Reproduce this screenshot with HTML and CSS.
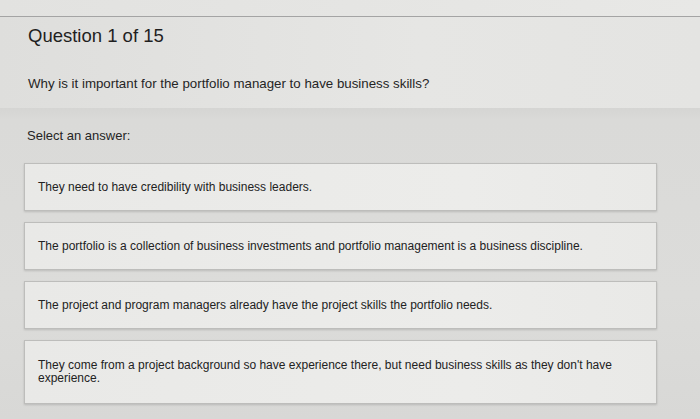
FILE: index.html
```html
<!DOCTYPE html>
<html>
<head>
<meta charset="utf-8">
<link rel="stylesheet" href="styles.css">
</head>
<body>
<div class="page">
  <div class="topbar"></div>
  <div class="header">
    <h1 class="title">Question 1 of 15</h1>
    <p class="question">Why is it important for the portfolio manager to have business skills?</p>
  </div>
  <div class="content">
    <p class="prompt">Select an answer:</p>
    <div class="options">
      <div class="option">They need to have credibility with business leaders.</div>
      <div class="option">The portfolio is a collection of business investments and portfolio management is a business discipline.</div>
      <div class="option">The project and program managers already have the project skills the portfolio needs.</div>
      <div class="option tall">They come from a project background so have experience there, but need business skills as they don't have experience.</div>
    </div>
  </div>
</div>
</body>
</html>
```
FILE: styles.css
```css
html, body {
  margin: 0;
  padding: 0;
}
body {
  width: 700px;
  height: 419px;
  overflow: hidden;
  font-family: "Liberation Sans", Arial, sans-serif;
  color: #262626;
  background: #d8d8d6;
}
.page {
  display: flex;
  flex-direction: column;
  height: 419px;
}
.topbar {
  height: 16px;
  background: linear-gradient(to right, #e2e2e0, #e8e8e6);
  border-bottom: 1px solid #a4a4a4;
}
.header {
  height: 91px;
  background: linear-gradient(to right, #dededc, #e6e6e4 60%, #e4e4e2);
  padding: 0 28px;
  box-sizing: border-box;
}
.title {
  margin: 0;
  padding-top: 7px;
  font-size: 18.5px;
  font-weight: normal;
  line-height: 24px;
  color: #1f1f1f;
}
.question {
  margin: 0;
  padding-top: 28px;
  font-size: 13.3px;
  line-height: 16px;
  color: #252525;
}
.content {
  flex: 1;
  background: linear-gradient(to bottom, #d5d5d3 0, #dadad8 12px, #dcdcda 60%, #d8d8d6);
  padding: 20px 43px 0 24px;
}
.prompt {
  margin: 0 0 0 3px;
  font-size: 13px;
  line-height: 16px;
  color: #252525;
}
.options {
  margin-top: 19px;
  display: flex;
  flex-direction: column;
  gap: 11px;
}
.option {
  height: 48px;
  box-sizing: border-box;
  display: flex;
  align-items: center;
  padding: 0 12px 0 13px;
  background: linear-gradient(to right, #e9e9e7, #ececea 70%, #e9e9e7);
  border: 1px solid #bdbdbb;
  box-shadow: 0 1px 2px rgba(0,0,0,0.15);
  font-size: 12px;
  line-height: 13px;
  color: #222;
}
.option.tall {
  height: 64px;
  padding-right: 12px;
}
```
